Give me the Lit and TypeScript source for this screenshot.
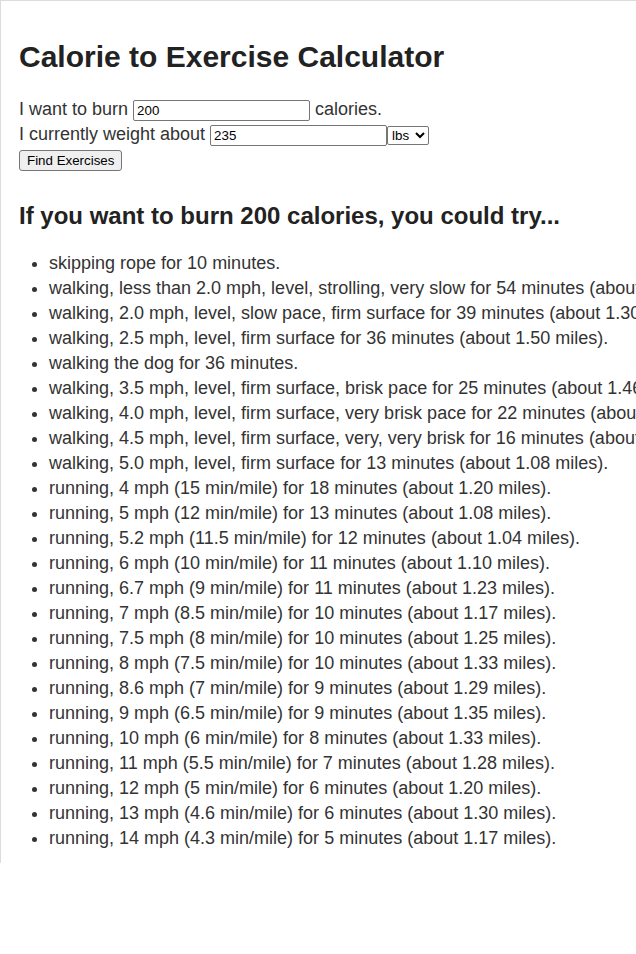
import { LitElement, html, css } from "lit";
import { customElement, state } from "lit/decorators.js";

interface Exercise {
  name: string;
  minutes: number;
  miles?: string;
}

const EXERCISES: Exercise[] = [
  { name: "skipping rope", minutes: 10 },
  { name: "walking, less than 2.0 mph, level, strolling, very slow", minutes: 54, miles: "1.80" },
  { name: "walking, 2.0 mph, level, slow pace, firm surface", minutes: 39, miles: "1.30" },
  { name: "walking, 2.5 mph, level, firm surface", minutes: 36, miles: "1.50" },
  { name: "walking the dog", minutes: 36 },
  { name: "walking, 3.5 mph, level, firm surface, brisk pace", minutes: 25, miles: "1.46" },
  { name: "walking, 4.0 mph, level, firm surface, very brisk pace", minutes: 22, miles: "1.47" },
  { name: "walking, 4.5 mph, level, firm surface, very, very brisk", minutes: 16, miles: "1.20" },
  { name: "walking, 5.0 mph, level, firm surface", minutes: 13, miles: "1.08" },
  { name: "running, 4 mph (15 min/mile)", minutes: 18, miles: "1.20" },
  { name: "running, 5 mph (12 min/mile)", minutes: 13, miles: "1.08" },
  { name: "running, 5.2 mph (11.5 min/mile)", minutes: 12, miles: "1.04" },
  { name: "running, 6 mph (10 min/mile)", minutes: 11, miles: "1.10" },
  { name: "running, 6.7 mph (9 min/mile)", minutes: 11, miles: "1.23" },
  { name: "running, 7 mph (8.5 min/mile)", minutes: 10, miles: "1.17" },
  { name: "running, 7.5 mph (8 min/mile)", minutes: 10, miles: "1.25" },
  { name: "running, 8 mph (7.5 min/mile)", minutes: 10, miles: "1.33" },
  { name: "running, 8.6 mph (7 min/mile)", minutes: 9, miles: "1.29" },
  { name: "running, 9 mph (6.5 min/mile)", minutes: 9, miles: "1.35" },
  { name: "running, 10 mph (6 min/mile)", minutes: 8, miles: "1.33" },
  { name: "running, 11 mph (5.5 min/mile)", minutes: 7, miles: "1.28" },
  { name: "running, 12 mph (5 min/mile)", minutes: 6, miles: "1.20" },
  { name: "running, 13 mph (4.6 min/mile)", minutes: 6, miles: "1.30" },
  { name: "running, 14 mph (4.3 min/mile)", minutes: 5, miles: "1.17" },
];

@customElement("app-root")
export class AppRoot extends LitElement {
  @state() private calories = "200";

  static styles = css`
    :host {
      display: block;
      overflow: hidden;
      background: #fff;
      color: #333;
      font-family: "Liberation Sans", Arial, sans-serif;
      font-size: 18px;
      line-height: 25px;
    }
    .panel {
      padding: 36px 0 12px 18px;
      border: solid #dcdcdc;
      border-width: 1px 0 0 1px;
    }
    .title,
    .subtitle {
      margin: 0;
      color: #222;
      font-weight: bold;
      white-space: nowrap;
    }
    .title {
      font-size: 30px;
      line-height: 40px;
    }
    .subtitle {
      margin-top: 28px;
      font-size: 24px;
      line-height: 32px;
    }
    .form {
      margin: 20px 0 0;
    }
    .row {
      display: flex;
      align-items: flex-end;
      height: 25px;
      white-space: pre;
    }
    .field,
    .unit,
    .submit {
      box-sizing: border-box;
      margin: 0 0 1px;
      border: 1px solid #767676;
      border-radius: 2px;
      color: #000;
      font-family: inherit;
    }
    .field {
      width: 177px;
      height: 21px;
      padding: 1px 3px;
      background: #fff;
    }
    .unit {
      width: 42px;
      height: 19px;
      margin-bottom: 2px;
      padding: 0;
      background: #fff;
    }
    .submit {
      height: 21px;
      padding: 0 7px;
      border-radius: 3px;
      background: #efefef;
      line-height: 19px;
    }
    .list {
      margin: 19px 0 0;
      padding: 0 0 0 30px;
      white-space: nowrap;
    }
  `;

  private find(e: Event) {
    e.preventDefault();
    const form = e.target as HTMLFormElement;
    this.calories = String(new FormData(form).get("calories"));
  }

  render() {
    return html`
      <main class="panel">
        <h1 class="title">Calorie to Exercise Calculator</h1>
        <form class="form" @submit=${this.find}>
          <div class="row"><label for="calories">I want to burn </label><input class="field" id="calories" name="calories" type="text" value="200"><span> calories.</span></div>
          <div class="row"><label for="weight">I currently weight about </label><input class="field" id="weight" name="weight" type="text" value="235"><select class="unit" name="unit" aria-label="Weight unit"><option>lbs</option><option>kg</option></select></div>
          <div class="row"><button class="submit" type="submit">Find Exercises</button></div>
        </form>
        <h2 class="subtitle">If you want to burn ${this.calories} calories, you could try...</h2>
        <ul class="list">
          ${EXERCISES.map(
            (x) => html`<li>${x.name} for ${x.minutes} minutes${x.miles ? ` (about ${x.miles} miles)` : ""}.</li>`
          )}
        </ul>
      </main>
    `;
  }
}
